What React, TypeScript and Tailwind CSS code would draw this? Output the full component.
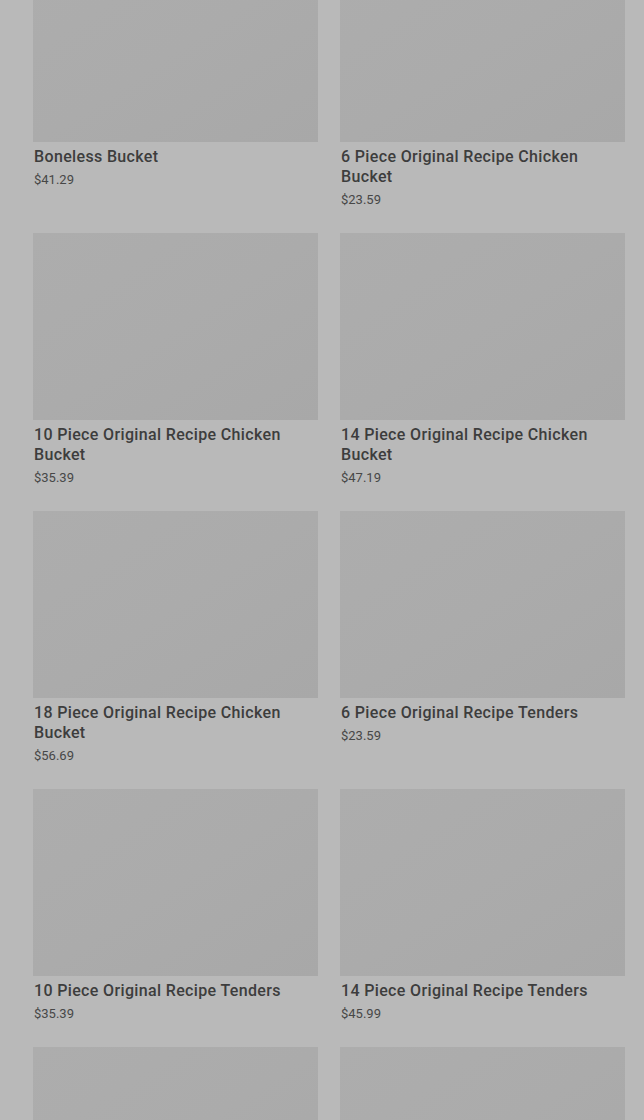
const items = [
  { name: 'Boneless Bucket', price: '$41.29' },
  { name: '6 Piece Original Recipe Chicken Bucket', price: '$23.59' },
  { name: '10 Piece Original Recipe Chicken Bucket', price: '$35.39' },
  { name: '14 Piece Original Recipe Chicken Bucket', price: '$47.19' },
  { name: '18 Piece Original Recipe Chicken Bucket', price: '$56.69' },
  { name: '6 Piece Original Recipe Tenders', price: '$23.59' },
  { name: '10 Piece Original Recipe Tenders', price: '$35.39' },
  { name: '14 Piece Original Recipe Tenders', price: '$45.99' },
  { name: '16 Piece Original Recipe Tenders', price: '$52.49' },
  { name: 'Fill Up Box', price: '$12.99' },
];

const ProductCard = ({ name, price }: { name: string; price: string }) => (
  <div className="flex flex-col">
    <div className="h-[187px] w-full bg-gradient-to-br from-[#adadad] via-[#ababab] to-[#a8a8a8]" />
    <h3 className="mt-[5px] pl-px text-[16px] leading-[20px] font-medium tracking-[0.35px] text-[#3d3d3d]">
      {name}
    </h3>
    <p className="mt-[4px] pl-px text-[13px] leading-[18px] text-[#474747]">{price}</p>
  </div>
);

const App = () => {
  return (
    <div
      className="h-[1120px] w-full overflow-hidden bg-[#b9b9b9]"
      style={{ fontFamily: 'Roboto, "Noto Sans", sans-serif' }}
    >
      <div className="-mt-[45px] grid grid-cols-2 gap-x-[22px] gap-y-[24px] pl-[33px] pr-[19px]">
        {items.map((item) => (
          <ProductCard key={item.name} name={item.name} price={item.price} />
        ))}
      </div>
    </div>
  );
};

export default App;
